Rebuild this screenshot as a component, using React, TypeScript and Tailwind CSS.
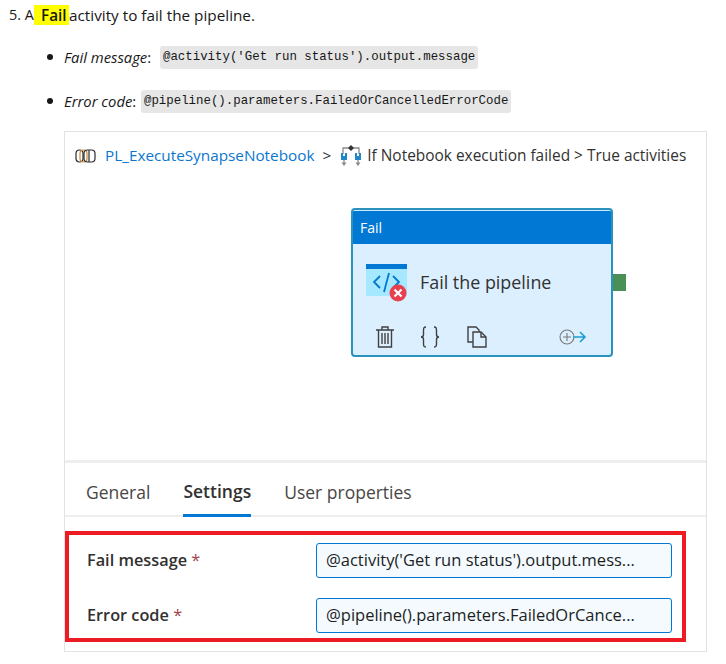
import React from 'react'

const sans = { fontFamily: '"Open Sans", "Noto Sans", sans-serif' }

const Code = ({ children }: { children: React.ReactNode }) => (
  <code className="mt-[1px] rounded-[3px] bg-[#e6e6e6] px-[3px] py-[2px] font-['Liberation_Mono',monospace] text-[12.4px] text-[#171717] not-italic">
    {children}
  </code>
)

const Bullet = ({ label, width, children }: { label: string; width: string; children: React.ReactNode }) => (
  <li className="flex h-[22px] items-center">
    <span className="ml-[47px] mr-[11px] size-[6px] rounded-full bg-[#171717]" />
    <span className={width}>
      <em className="text-[#171717]">{label}</em>:
    </span>
    <Code>{children}</Code>
  </li>
)

const PipelineIcon = () => (
  <svg width="22" height="16" viewBox="0 0 22 16" fill="none" stroke="#2b2b2b" strokeWidth="1.2">
    <rect x="1" y="2" width="7" height="12" rx="3.5" />
    <rect x="5" y="2" width="7" height="12" rx="3.5" stroke="#c98a3c" />
    <rect x="9" y="2" width="11" height="12" rx="3.5" />
    <path d="M14 2v12" />
  </svg>
)

const IfIcon = () => (
  <svg width="22" height="22" viewBox="0 0 22 22" fill="none">
    <path d="M3 9V3h16v6" stroke="#8a8a8a" strokeWidth="1.3" />
    <path d="M11 0l3 3-3 3-3-3z" fill="#333" />
    <path d="M1 8h2v3h2V8h2v7H1zM15 8h2v3h2V8h2v7h-6z" fill="#1e88c9" />
    <path d="M4 15v3M18 15v3" stroke="#8a8a8a" strokeWidth="1.3" />
    <path d="M1.5 17.5L4 21l2.5-3.5zM15.5 17.5L18 21l2.5-3.5z" fill="#8a8a8a" />
  </svg>
)

const FailIcon = () => (
  <svg width="44" height="38" viewBox="0 0 44 38" fill="none">
    <rect x="0" y="0" width="41" height="32" rx="1" fill="#a6e8ff" />
    <rect x="0" y="0" width="41" height="5" fill="#0078d4" />
    <path d="M14 12l-6 6 6 6M27 12l6 6-6 6" stroke="#0078d4" strokeWidth="1.8" />
    <path d="M23 9l-5 19" stroke="#0078d4" strokeWidth="1.8" />
    <circle cx="32" cy="29" r="8.5" fill="#e8404f" />
    <path d="M28.5 25.5l7 7M35.5 25.5l-7 7" stroke="white" strokeWidth="2.2" />
  </svg>
)

const TrashIcon = () => (
  <svg width="18" height="22" viewBox="0 0 18 22" fill="none" stroke="#404040" strokeWidth="1.4">
    <path d="M0 4h18M6 4V1h6v3" />
    <path d="M2.5 4v17h13V4" />
    <path d="M6 7v11M9 7v11M12 7v11" />
  </svg>
)

const BracesIcon = () => (
  <svg width="20" height="22" viewBox="0 0 20 22" fill="none" stroke="#404040" strokeWidth="1.4">
    <path d="M6 1C3.5 1 3.5 2.5 3.5 5v3.5C3.5 10 2.5 11 1 11c1.5 0 2.5 1 2.5 2.5V17c0 2.5 0 4 2.5 4" />
    <path d="M14 1c2.5 0 2.5 1.5 2.5 4v3.5c0 1.5 1 2.5 2.5 2.5-1.5 0-2.5 1-2.5 2.5V17c0 2.5 0 4-2.5 4" />
  </svg>
)

const CopyIcon = () => (
  <svg width="20" height="22" viewBox="0 0 20 22" fill="none" stroke="#404040" strokeWidth="1.4">
    <path d="M6 16H1V1h8l3 3v2" />
    <path d="M6 6h8l5 5v10H6z" />
    <path d="M14 6v5h5" />
  </svg>
)

const AddOutputIcon = () => (
  <svg width="28" height="16" viewBox="0 0 28 16" fill="none">
    <circle cx="8" cy="8" r="7" stroke="#7a7a7a" strokeWidth="1.1" />
    <path d="M4 8h8M8 4v8" stroke="#7a7a7a" strokeWidth="1.1" />
    <path d="M14 8h12M21 3l5 5-5 5" stroke="#1a9fd0" strokeWidth="1.6" />
  </svg>
)

const Field = ({ label, value }: { label: string; value: string }) => (
  <div className="flex items-center">
    <label className="w-[229px] text-[16.3px] font-semibold text-[#323130]">
      {label} <span className="font-normal text-[#a4404a]">*</span>
    </label>
    <div className="flex h-[35px] w-[356px] items-center rounded-[3px] border border-[#0078d4] bg-[#f5faff] pl-[9px] text-[16.5px] whitespace-nowrap text-[#201f1e]">
      {value}
    </div>
  </div>
)

export default function App() {
  return (
    <div className="h-[664px] w-[726px] overflow-hidden bg-white pt-[5px] text-[14.8px] text-[#171717]" style={sans}>
      <p className="flex h-[20px] items-center pl-[9px] text-[15.3px] leading-[20px]">
        <span className="w-[25px] whitespace-nowrap text-[14.4px]">5. A</span>
        <strong className="w-[35px] bg-[#ffff00] pl-[7px] font-semibold">Fail</strong>
        <span>activity to fail the pipeline.</span>
      </p>

      <ul className="mt-[21px] flex flex-col gap-[22px]">
        <Bullet label="Fail message" width="w-[96px]">@activity('Get run status').output.message</Bullet>
        <Bullet label="Error code" width="w-[77px]">@pipeline().parameters.FailedOrCancelledErrorCode</Bullet>
      </ul>

      <section className="ml-[64px] mt-[19px] h-[521px] w-[643px] border border-[#e3e3e3]">
        {/* breadcrumb + canvas */}
        <div className="h-[331px] border-b-[3px] border-[#eeeeee]">
          <div className="flex items-center pl-[10px] pt-[13px] text-[15.3px] leading-none whitespace-nowrap text-[#323130]">
            <PipelineIcon />
            <span className="ml-[8px] text-[#0b76d0]">PL_ExecuteSynapseNotebook</span>
            <span className="ml-[8px]">&gt;</span>
            <span className="ml-[9px]"><IfIcon /></span>
            <span className="ml-[5px] text-[15.45px]">If Notebook execution failed &gt; True activities</span>
          </div>

          <div className="ml-[286px] mt-[41px] flex items-center">
            <div className="h-[149px] w-[262px] overflow-hidden rounded-[4px] border-2 border-[#2a93bd] bg-[#dcefff]">
              <div className="flex h-[34px] items-center border-t border-[#cfe6f7] bg-[#0078d4] pl-[7px] text-[14px] text-white">Fail</div>
              <div className="flex items-center pl-[13px] pt-[20px] text-[17.9px] text-[#323130]">
                <FailIcon />
                <span className="mb-[2px] ml-[10px]">Fail the pipeline</span>
              </div>
              <div className="mt-[24px] flex items-center pl-[23px]">
                <TrashIcon />
                <span className="ml-[26px]"><BracesIcon /></span>
                <span className="ml-[27px]"><CopyIcon /></span>
                <span className="ml-[72px]"><AddOutputIcon /></span>
              </div>
            </div>
            <div className="h-[17px] w-[13px] bg-[#4a8f55]" />
          </div>
        </div>

        {/* tabs */}
        <div className="flex h-[54px] items-end gap-[33px] border-b-2 border-[#eeeeee] pl-[21px] text-[17.5px] text-[#484644]">
          <span className="pb-[10px]">General</span>
          <span className="-mb-[2px] border-b-[3px] border-[#0078d4] pb-[10px] font-semibold text-[#323130]">Settings</span>
          <span className="pb-[10px]">User properties</span>
        </div>

        {/* highlighted form */}
        <div className="mt-[14px] flex h-[111px] w-[621px] flex-col gap-[20px] border-[4px] border-[#ed1c24] pl-[18px] pt-[8px]">
          <Field label="Fail message" value="@activity('Get run status').output.mess..." />
          <Field label="Error code" value="@pipeline().parameters.FailedOrCance..." />
        </div>
      </section>
    </div>
  )
}
